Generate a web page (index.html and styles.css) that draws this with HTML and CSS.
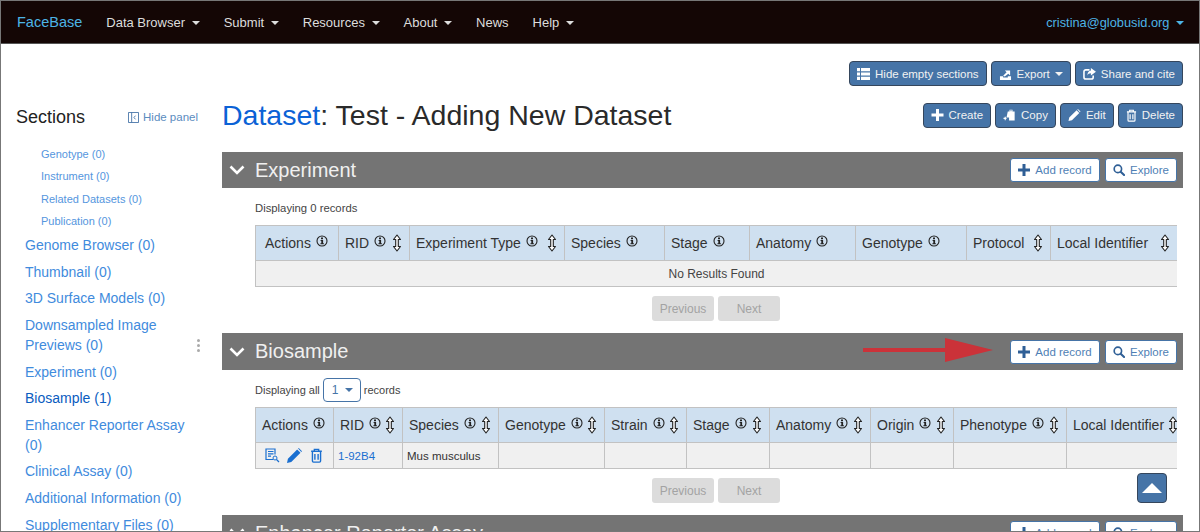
FILE: index.html
```html
<!DOCTYPE html>
<html lang="en">
<head>
  <meta charset="UTF-8" />
  <title>Dataset: Test - Adding New Dataset</title>
  <link rel="stylesheet" href="styles.css">
</head>
<body>
  <svg class="sprite" width="0" height="0">
    <symbol id="i-info" viewBox="0 0 12 12"><circle cx="6" cy="6" r="5" fill="none" stroke="currentColor" stroke-width="1.1"/><path d="M5 2.600h2v1.700H5zM4.600 5h2.500v3.200h.8v1H4.400v-1h.9V6h-.7z" fill="currentColor"/></symbol>
    <symbol id="i-sort" viewBox="0 0 10 18"><path d="M5 1l3.500 4.500H6.300v7h2.200L5 17l-3.500-4.500h2.200v-7H1.500z" fill="#fff" stroke="#222" stroke-width="1.100" stroke-linejoin="round"/></symbol>
    <symbol id="i-plus" viewBox="0 0 12 12"><path d="M4.500 0h3v4.500H12v3H7.500V12h-3V7.500H0v-3h4.500z" fill="currentColor"/></symbol>
    <symbol id="i-search" viewBox="0 0 13 13"><circle cx="5.300" cy="5.300" r="4" fill="none" stroke="currentColor" stroke-width="1.800"/><path d="M8.300 8.300l3.700 3.700" stroke="currentColor" stroke-width="2.200" stroke-linecap="round"/></symbol>
    <symbol id="i-list" viewBox="0 0 13 12"><path d="M0 0h3v3.200H0zM4 0h9v3.200H4zM0 4.400h3v3.200H0zM4 4.400h9v3.200H4zM0 8.800h3V12H0zM4 8.800h9V12H4z" fill="currentColor"/></symbol>
    <symbol id="i-export" viewBox="0 0 14 13"><path d="M1 9h3.500v1.300h5V9H13v4H1zM4.500 8.300L8.200 4.500 6.300 2.800H12v5.400L10 6.300 6.200 9.200z" fill="currentColor"/></symbol>
    <symbol id="i-share" viewBox="0 0 14 13"><path d="M7 2H3a2 2 0 0 0-2 2v6a2 2 0 0 0 2 2h6a2 2 0 0 0 2-2V8" fill="none" stroke="currentColor" stroke-width="1.700"/><path d="M8.500 0L14 4 8.500 8V5.700C6.500 5.700 5.300 6.500 4.700 8c0-3 1.500-5 3.800-5.300z" fill="currentColor"/></symbol>
    <symbol id="i-copy" viewBox="0 0 14 14"><path d="M5 3h2V.8h3.500V3H13v10.500H6.500V10H3.500z" fill="currentColor"/><path d="M8 2h1.500" stroke="#4674a7"/><path d="M0 11h3.500M2 9v4" stroke="currentColor" stroke-width="1.300"/></symbol>
    <symbol id="i-pencil" viewBox="0 0 13 13"><path d="M0 13l.8-3.700L8.800 1.300l2.900 2.900-8 8zM9.600.5l.6-.5 2.800 2.800-.6.600z" fill="currentColor"/></symbol>
    <symbol id="i-trash" viewBox="0 0 12 14"><path d="M1 3h10M4 3V1.300h4V3M2.200 3v9.200c0 .6.400 1 1 1h5.600c.6 0 1-.4 1-1V3M4.500 5.500v5.500M7.500 5.500v5.500" fill="none" stroke="currentColor" stroke-width="1.300"/></symbol>
    <symbol id="i-view" viewBox="0 0 15 15"><path d="M8 11.500H1V1h9v5.500M3 3.500h5.500M3 5.800h5.500M3 8.100h3" fill="none" stroke="currentColor" stroke-width="1.200"/><circle cx="10" cy="10" r="2" fill="none" stroke="currentColor"/><path d="M11.500 11.500l2.500 2.500" stroke="currentColor" stroke-width="1.300"/></symbol>
    <symbol id="i-panel" viewBox="0 0 12 12"><path d="M.5.500h11v11H.500zM4 .5v11M8.200 4L6.500 6l1.700 2" fill="none" stroke="currentColor"/></symbol>
    <symbol id="i-chevron" viewBox="0 0 16 10"><path d="M1.500 1.500L8 8l6.500-6.500" fill="none" stroke="currentColor" stroke-width="2.600"/></symbol>
  </svg>

  <div class="page">
    <nav class="navbar">
      <a class="brand">FaceBase</a>
      <ul class="nav-links">
        <li>Data Browser <span class="caret"></span></li>
        <li>Submit <span class="caret"></span></li>
        <li>Resources <span class="caret"></span></li>
        <li>About <span class="caret"></span></li>
        <li>News</li>
        <li>Help <span class="caret"></span></li>
      </ul>
      <a class="user">cristina@globusid.org <span class="caret"></span></a>
    </nav>

    <div class="content">
      <aside class="sidebar">
        <div class="sidebar-head">
          <span class="sidebar-title">Sections</span>
          <a class="hide-panel"><svg class="icon-panel"><use href="#i-panel"/></svg> Hide panel</a>
        </div>
        <ul class="toc-sub">
          <li>Genotype (0)</li>
          <li>Instrument (0)</li>
          <li>Related Datasets (0)</li>
          <li>Publication (0)</li>
        </ul>
        <ul class="toc">
          <li>Genome Browser (0)</li>
          <li>Thumbnail (0)</li>
          <li>3D Surface Models (0)</li>
          <li>Downsampled Image Previews (0)</li>
          <li>Experiment (0)</li>
          <li class="active">Biosample (1)</li>
          <li>Enhancer Reporter Assay (0)</li>
          <li>Clinical Assay (0)</li>
          <li>Additional Information (0)</li>
          <li>Supplementary Files (0)</li>
        </ul>
        <div class="resize-dots"><i></i><i></i><i></i></div>
      </aside>

      <main class="main">
        <div class="toolbar">
          <button class="btn"><svg class="icon"><use href="#i-list"/></svg>Hide empty sections</button>
          <button class="btn"><svg class="icon"><use href="#i-export"/></svg>Export <span class="caret"></span></button>
          <button class="btn"><svg class="icon"><use href="#i-share"/></svg>Share and cite</button>
        </div>

        <div class="title-row">
          <h1><a>Dataset</a>: Test - Adding New Dataset</h1>
          <div class="title-actions">
            <button class="btn"><svg class="icon"><use href="#i-plus"/></svg>Create</button>
            <button class="btn"><svg class="icon"><use href="#i-copy"/></svg>Copy</button>
            <button class="btn"><svg class="icon"><use href="#i-pencil"/></svg>Edit</button>
            <button class="btn"><svg class="icon icon-narrow"><use href="#i-trash"/></svg>Delete</button>
          </div>
        </div>

        <section class="section">
          <header class="section-bar">
            <svg class="chevron"><use href="#i-chevron"/></svg>
            <h2>Experiment</h2>
            <div class="bar-actions">
              <button class="btn-light btn-add"><svg class="icon"><use href="#i-plus"/></svg>Add record</button>
              <button class="btn-light btn-explore"><svg class="icon"><use href="#i-search"/></svg>Explore</button>
            </div>
          </header>
          <div class="section-body">
            <div class="meta">Displaying 0 records</div>
            <div class="table-wrap">
              <table class="table-exp">
                <colgroup>
                  <col class="w83"><col class="w71"><col class="w155"><col class="w100"><col class="w85"><col class="w106"><col class="w111"><col class="w84"><col class="w127">
                </colgroup>
                <thead>
                  <tr>
                    <th><div class="th">Actions <svg class="info"><use href="#i-info"/></svg></div></th>
                    <th><div class="th">RID <svg class="info"><use href="#i-info"/></svg><svg class="sort"><use href="#i-sort"/></svg></div></th>
                    <th><div class="th">Experiment Type <svg class="info"><use href="#i-info"/></svg><svg class="sort"><use href="#i-sort"/></svg></div></th>
                    <th><div class="th">Species <svg class="info"><use href="#i-info"/></svg></div></th>
                    <th><div class="th">Stage <svg class="info"><use href="#i-info"/></svg></div></th>
                    <th><div class="th">Anatomy <svg class="info"><use href="#i-info"/></svg></div></th>
                    <th><div class="th">Genotype <svg class="info"><use href="#i-info"/></svg></div></th>
                    <th><div class="th">Protocol <svg class="sort"><use href="#i-sort"/></svg></div></th>
                    <th><div class="th">Local Identifier <svg class="sort"><use href="#i-sort"/></svg></div></th>
                  </tr>
                </thead>
                <tbody>
                  <tr><td class="empty" colspan="9">No Results Found</td></tr>
                </tbody>
              </table>
            </div>
            <div class="pager">
              <button class="btn-off btn-prev">Previous</button>
              <button class="btn-off btn-next">Next</button>
            </div>
          </div>
        </section>

        <section class="section">
          <header class="section-bar bar-tall">
            <svg class="chevron"><use href="#i-chevron"/></svg>
            <h2>Biosample</h2>
            <svg class="red-arrow" viewBox="0 0 130 24"><path d="M0 10h82V0l48 12-48 12V14H0z" fill="#cb3239"/></svg>
            <div class="bar-actions">
              <button class="btn-light btn-add"><svg class="icon"><use href="#i-plus"/></svg>Add record</button>
              <button class="btn-light btn-explore"><svg class="icon"><use href="#i-search"/></svg>Explore</button>
            </div>
          </header>
          <div class="section-body">
            <div class="meta meta-select">Displaying all <span class="page-size">1 <span class="caret"></span></span> records</div>
            <div class="table-wrap">
              <table class="table-bio">
                <colgroup>
                  <col class="w78"><col class="w69"><col class="w96"><col class="w106"><col class="w82"><col class="w83"><col class="w101"><col class="w83"><col class="w113"><col class="w119">
                </colgroup>
                <thead>
                  <tr>
                    <th><div class="th">Actions <svg class="info"><use href="#i-info"/></svg></div></th>
                    <th><div class="th">RID <svg class="info"><use href="#i-info"/></svg><svg class="sort"><use href="#i-sort"/></svg></div></th>
                    <th><div class="th">Species <svg class="info"><use href="#i-info"/></svg><svg class="sort"><use href="#i-sort"/></svg></div></th>
                    <th><div class="th">Genotype <svg class="info"><use href="#i-info"/></svg><svg class="sort"><use href="#i-sort"/></svg></div></th>
                    <th><div class="th">Strain <svg class="info"><use href="#i-info"/></svg><svg class="sort"><use href="#i-sort"/></svg></div></th>
                    <th><div class="th">Stage <svg class="info"><use href="#i-info"/></svg><svg class="sort"><use href="#i-sort"/></svg></div></th>
                    <th><div class="th">Anatomy <svg class="info"><use href="#i-info"/></svg><svg class="sort"><use href="#i-sort"/></svg></div></th>
                    <th><div class="th">Origin <svg class="info"><use href="#i-info"/></svg><svg class="sort"><use href="#i-sort"/></svg></div></th>
                    <th><div class="th">Phenotype <svg class="info"><use href="#i-info"/></svg><svg class="sort"><use href="#i-sort"/></svg></div></th>
                    <th><div class="th">Local Identifier <svg class="sort"><use href="#i-sort"/></svg></div></th>
                  </tr>
                </thead>
                <tbody>
                  <tr>
                    <td>
                      <div class="row-actions">
                        <svg class="row-icon"><use href="#i-view"/></svg>
                        <svg class="row-icon"><use href="#i-pencil"/></svg>
                        <svg class="row-icon"><use href="#i-trash"/></svg>
                      </div>
                    </td>
                    <td><a class="rid">1-92B4</a></td>
                    <td>Mus musculus</td>
                    <td></td><td></td><td></td><td></td><td></td><td></td><td></td>
                  </tr>
                </tbody>
              </table>
            </div>
            <div class="pager">
              <button class="btn-off btn-prev">Previous</button>
              <button class="btn-off btn-next">Next</button>
            </div>
          </div>
          <button class="to-top" aria-label="Back to top"></button>
        </section>

        <section class="section">
          <header class="section-bar">
            <svg class="chevron"><use href="#i-chevron"/></svg>
            <h2>Enhancer Reporter Assay</h2>
            <div class="bar-actions">
              <button class="btn-light btn-add"><svg class="icon"><use href="#i-plus"/></svg>Add record</button>
              <button class="btn-light btn-explore"><svg class="icon"><use href="#i-search"/></svg>Explore</button>
            </div>
          </header>
        </section>
      </main>
    </div>
  </div>
</body>
</html>
```

FILE: styles.css
```css
html, body { margin: 0; height: 532px; overflow: hidden; background: #fff; }
body { font-family: "Liberation Sans", Arial, sans-serif; color: #333; }
ul { list-style: none; margin: 0; padding: 0; }
button { font-family: inherit; cursor: default; }
.sprite { position: absolute; }

.page { box-sizing: border-box; height: 532px; border: 1px solid #777; overflow: hidden; }

.caret { display: inline-block; width: 0; height: 0; margin-left: 3px; vertical-align: 2px; border-top: 4px solid currentColor; border-left: 4px solid transparent; border-right: 4px solid transparent; }

/* navbar */
.navbar { display: flex; align-items: center; height: 42px; padding: 0 15px 0 16px; background: #140605; border-bottom: 1px solid #555; font-size: 13px; color: #ddd; }
.brand { font-size: 14.500px; color: #4db4e6; margin-right: 24px; }
.nav-links { display: flex; gap: 24px; flex: 1; }
.user { color: #4db4e6; font-size: 12.800px; }

/* layout */
.content { display: flex; }
.sidebar { position: relative; flex: 0 0 221px; box-sizing: border-box; padding: 57px 24px 0 15px; }
.main { flex: 0 0 961px; min-width: 0; }

/* sidebar */
.sidebar-head { display: flex; justify-content: space-between; align-items: center; height: 32px; }
.sidebar-title { font-size: 18px; color: #222; }
.hide-panel { display: flex; align-items: center; gap: 4px; font-size: 11.500px; color: #5b8cc0; }
.icon-panel { width: 11px; height: 11px; color: #4674a7; }
.toc-sub { padding: 9.700px 0 0 25px; font-size: 11px; color: #5596de; }
.toc-sub li { height: 22.500px; line-height: 22.500px; }
.toc { margin-top: -.7px; padding-left: 9px; font-size: 14px; line-height: 20px; color: #3f8bdd; }
.toc li { padding: 3.300px 0; }
.toc .active { color: #0a5cc0; }
.resize-dots { position: absolute; left: 196px; top: 295px; display: flex; flex-direction: column; gap: 2px; }
.resize-dots i { width: 3px; height: 3px; border-radius: 50%; background: #aaa; }

/* toolbars */
.toolbar { display: flex; justify-content: flex-end; gap: 4px; padding-top: 17px; }
.title-row { display: flex; justify-content: space-between; align-items: center; height: 50px; margin-top: 4px; margin-bottom: 12px; }
.title-actions { display: flex; gap: 4px; }
h1 { margin: 0; font-size: 28.500px; font-weight: 400; color: #2a2a2a; }
h1 a { color: #0b62d6; }

.btn { display: flex; align-items: center; height: 25px; padding: 0 7px; background: #4674a7; border: 1px solid #35465c; border-radius: 4px; color: #f2f2f2; font-size: 11.500px; white-space: nowrap; }
.btn .icon { width: 13px; height: 12px; margin-right: 5px; color: #fff; }
.btn .icon-narrow { width: 11px; height: 13px; }
.btn .caret { margin-left: 5px; vertical-align: 0; }

/* sections */
.section-bar { position: relative; display: flex; align-items: center; height: 36px; box-sizing: border-box; padding: 0 6px 0 7px; background: #747474; color: #f0f0f0; }
.bar-tall { height: 37px; }
.section-bar h2 { flex: 1; margin: 0 0 0 10px; font-size: 20px; font-weight: 400; }
.chevron { width: 16px; height: 10px; color: #fff; }
.bar-actions { display: flex; gap: 5px; }
.btn-light { display: flex; align-items: center; justify-content: center; height: 24px; padding: 0; background: #fff; border: 1px solid #4674a7; border-radius: 3px; color: #4f7fb5; font-size: 11.500px; white-space: nowrap; }
.btn-light .icon { width: 12px; height: 12px; margin-right: 5px; color: #2f5f96; }
.btn-add { width: 90px; }
.btn-explore { width: 72px; }
.red-arrow { position: absolute; left: 641px; top: 5px; width: 130px; height: 24px; }

.section { position: relative; }
.section-body { padding: 8px 6px 12px 33px; }
.meta { display: flex; align-items: center; gap: 3px; height: 24px; font-size: 11.300px; color: #444; }
.meta-select { font-size: 11px; }
.page-size { box-sizing: border-box; display: inline-block; width: 38px; height: 24px; line-height: 22px; padding-left: 8px; border: 1px solid #4674a7; border-radius: 4px; color: #4674a7; font-size: 12px; }
.table-wrap { margin-top: 5px; overflow: hidden; }
table { border-collapse: collapse; table-layout: fixed; font-size: 12px; }
.table-exp { width: 922px; }
.table-bio { width: 930px; }
th, td { border: 1px solid #c2c2c2; }
th { height: 34px; padding: 0 7px 0 6px; background: #cfe0f0; font-weight: 400; font-size: 14px; text-align: left; color: #333; }
.table-exp th:first-child { padding-left: 9px; }
td { height: 25px; padding: 0 4px; background: #f0f0f0; font-size: 11.500px; }
.th { display: flex; align-items: center; white-space: nowrap; }
.info { flex: none; width: 12px; height: 12px; margin: -4px 0 0 5px; color: #222; }
.sort { flex: none; width: 10px; height: 18px; margin-left: auto; }
td.empty { text-align: center; font-size: 12px; color: #444; }
.row-actions { display: flex; gap: 7px; padding-left: 5px; }
.row-icon { width: 15px; height: 15px; color: #1a6fd0; }
.rid { color: #1a6fd0; }

.w71 { width: 71px; } .w83 { width: 83px; } .w155 { width: 155px; } .w100 { width: 100px; }
.w85 { width: 85px; } .w106 { width: 106px; } .w111 { width: 111px; } .w84 { width: 84px; }
.w127 { width: 127px; } .w78 { width: 78px; } .w69 { width: 69px; } .w96 { width: 96px; }
.w82 { width: 82px; } .w101 { width: 101px; } .w113 { width: 113px; } .w119 { width: 119px; }

.pager { display: flex; justify-content: center; gap: 4px; margin-top: 9px; }
.btn-off { height: 25px; background: #dcdcdc; border: 0; border-radius: 3px; color: #a3a3a3; font-size: 12px; padding: 0; }
.btn-prev, .btn-next { width: 62px; }

.to-top { position: absolute; right: 16px; bottom: 12px; width: 30px; height: 30px; padding: 0; background: #4674a7; border: 1px solid #35465c; border-radius: 4px; }
.to-top::after { content: ""; display: block; width: 0; margin: 0 auto; border-bottom: 10px solid #fff; border-left: 10px solid transparent; border-right: 10px solid transparent; }
```
